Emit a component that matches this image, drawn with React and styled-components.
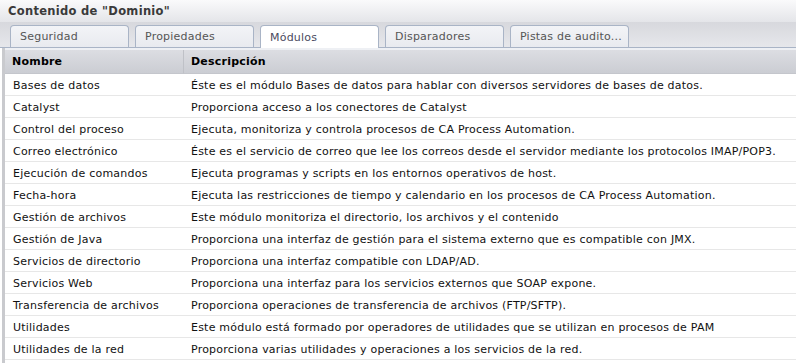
import React from "react";
import styled, { createGlobalStyle } from "styled-components";

const Global = createGlobalStyle`
  html, body { margin: 0; padding: 0; background: #fff; }
  body { font-family: "DejaVu Sans", Verdana, sans-serif; font-size: 11px; letter-spacing: 0.22px; color: #000; }
`;

const Panel = styled.div`
  width: 796px;
  height: 363px;
  overflow: hidden;
  display: flex;
  flex-direction: column;
  background: #fff;
`;

const TitleBar = styled.div`
  height: 22px;
  flex: none;
  display: flex;
  align-items: center;
  padding-left: 8px;
  background: linear-gradient(#fafafb, #e4e5e9);
  font-weight: bold;
  font-size: 11.5px;
  letter-spacing: 0.3px;
  color: #3a3a3a;
`;

const Body = styled.div`
  flex: 1;
  display: flex;
  flex-direction: column;
  margin-left: 2px;
  border-left: 3px solid #c9cace;
  background: #fff;
  min-height: 0;
`;

const TabStrip = styled.div`
  height: 25px;
  flex: none;
  display: flex;
  align-items: flex-end;
  gap: 6px;
  padding-left: 10px;
  margin-left: -5px;
  background: linear-gradient(#d7d8dd, #e6e7eb);
  border-bottom: 1px solid #a9b4c6;
`;

const Tab = styled.div`
  width: 119px;
  box-sizing: border-box;
  display: flex;
  align-items: center;
  padding-left: 9px;
  border: 1px solid #a9b4c6;
  border-bottom: none;
  border-radius: 4px 4px 0 0;
  background: ${(p) => (p.$active ? "#fff" : "linear-gradient(#f3f4f7, #e8eaef)")};
  color: ${(p) => (p.$active ? "#4a4a5e" : "#555")};
  margin-bottom: ${(p) => (p.$active ? "-1px" : "0")};
  height: ${(p) => (p.$active ? "23px" : "22px")};
  white-space: nowrap;
`;

const Gap = styled.div`
  height: 2px;
  flex: none;
  background: #eef0f4;
`;

const Table = styled.div`
  display: grid;
  grid-template-columns: 178px 1fr;
`;

const HeadCell = styled.div`
  height: 23px;
  display: flex;
  align-items: center;
  padding-left: 7px;
  font-weight: bold;
  color: #000;
  background: linear-gradient(#dcdde2, #cbcdd3);
  border-bottom: 1px solid #c4c6cc;
  border-left: ${(p) => (p.$first ? "none" : "1px solid #bfc1c7")};
`;

const Cell = styled.div`
  height: 22px;
  box-sizing: border-box;
  display: flex;
  align-items: center;
  padding-left: 8px;
  padding-top: 1px;
  border-bottom: 1px solid #e7e7e7;
  white-space: nowrap;
  overflow: hidden;
  color: #111;
`;

const tabs = ["Seguridad", "Propiedades", "Módulos", "Disparadores", "Pistas de audito..."];

const rows = [
  ["Bases de datos", "Éste es el módulo Bases de datos para hablar con diversos servidores de bases de datos."],
  ["Catalyst", "Proporciona acceso a los conectores de Catalyst"],
  ["Control del proceso", "Ejecuta, monitoriza y controla procesos de CA Process Automation."],
  ["Correo electrónico", "Éste es el servicio de correo que lee los correos desde el servidor mediante los protocolos IMAP/POP3."],
  ["Ejecución de comandos", "Ejecuta programas y scripts en los entornos operativos de host."],
  ["Fecha-hora", "Ejecuta las restricciones de tiempo y calendario en los procesos de CA Process Automation."],
  ["Gestión de archivos", "Este módulo monitoriza el directorio, los archivos y el contenido"],
  ["Gestión de Java", "Proporciona una interfaz de gestión para el sistema externo que es compatible con JMX."],
  ["Servicios de directorio", "Proporciona una interfaz compatible con LDAP/AD."],
  ["Servicios Web", "Proporciona una interfaz para los servicios externos que SOAP expone."],
  ["Transferencia de archivos", "Proporciona operaciones de transferencia de archivos (FTP/SFTP)."],
  ["Utilidades", "Este módulo está formado por operadores de utilidades que se utilizan en procesos de PAM"],
  ["Utilidades de la red", "Proporciona varias utilidades y operaciones a los servicios de la red."],
];

export default function App() {
  return (
    <Panel>
      <Global />
      <TitleBar>Contenido de "Dominio"</TitleBar>
      <Body>
        <TabStrip>
          {tabs.map((t) => (
            <Tab key={t} $active={t === "Módulos"}>{t}</Tab>
          ))}
        </TabStrip>
        <Gap />
        <Table>
          <HeadCell $first>Nombre</HeadCell>
          <HeadCell>Descripción</HeadCell>
          {rows.map(([n, d]) => (
            <React.Fragment key={n}>
              <Cell $first>{n}</Cell>
              <Cell>{d}</Cell>
            </React.Fragment>
          ))}
        </Table>
      </Body>
    </Panel>
  );
}
